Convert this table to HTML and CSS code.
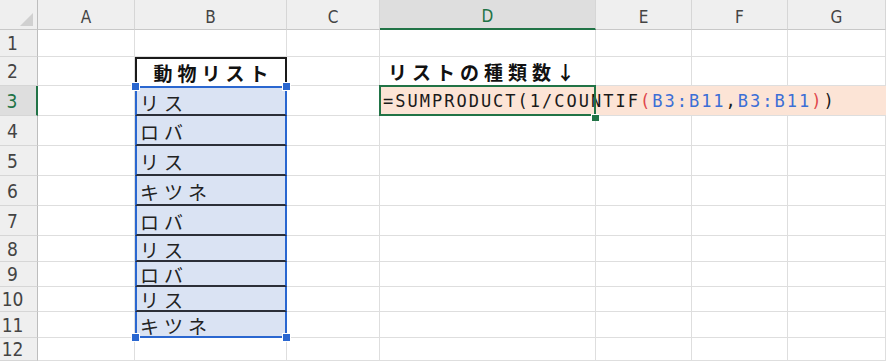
FILE: index.html
```html
<!DOCTYPE html>
<html lang="ja">
<head>
  <meta charset="UTF-8" />
  <meta name="viewport" content="width=device-width, initial-scale=1" />
  <title>動物リスト</title>
  <link rel="stylesheet" href="styles.css">
</head>
<body>
  <div class="sheet">
    <div class="row">
      <div class="corner">
        <svg width="38" height="30" viewBox="0 0 38 30"><polygon points="33,13 33,26 20,26" fill="#d0d0d0"/></svg>
      </div>
      <div class="col">A</div>
      <div class="col">B</div>
      <div class="col">C</div>
      <div class="col col-on">D</div>
      <div class="col">E</div>
      <div class="col">F</div>
      <div class="col">G</div>
    </div>

    <div class="row">
      <div class="num">1</div>
      <div class="cell"></div><div class="cell"></div><div class="cell"></div><div class="cell"></div>
      <div class="cell"></div><div class="cell"></div><div class="cell"></div>
    </div>

    <div class="row">
      <div class="num">2</div>
      <div class="cell"></div>
      <div class="cell title">動物リスト</div>
      <div class="cell"></div>
      <div class="cell note">リストの種類数↓</div>
      <div class="cell"></div><div class="cell"></div><div class="cell"></div>
    </div>

    <div class="row">
      <div class="num num-on">3</div>
      <div class="cell"></div>
      <div class="cell pick pick-top">リス<span class="knob knob-l"></span><span class="knob knob-r"></span></div>
      <div class="cell"></div>
      <div class="cell edit">=SUMPRODUCT(1/COUNTIF<span class="paren">(</span><span class="ref">B3:B11</span>,<span class="ref">B3:B11</span><span class="paren">)</span>)</div>
    </div>

    <div class="row">
      <div class="num">4</div>
      <div class="cell"></div>
      <div class="cell pick">ロバ</div>
      <div class="cell"></div><div class="cell"></div><div class="cell"></div><div class="cell"></div><div class="cell"></div>
    </div>

    <div class="row">
      <div class="num">5</div>
      <div class="cell"></div>
      <div class="cell pick">リス</div>
      <div class="cell"></div><div class="cell"></div><div class="cell"></div><div class="cell"></div><div class="cell"></div>
    </div>

    <div class="row">
      <div class="num">6</div>
      <div class="cell"></div>
      <div class="cell pick">キツネ</div>
      <div class="cell"></div><div class="cell"></div><div class="cell"></div><div class="cell"></div><div class="cell"></div>
    </div>

    <div class="row">
      <div class="num">7</div>
      <div class="cell"></div>
      <div class="cell pick">ロバ</div>
      <div class="cell"></div><div class="cell"></div><div class="cell"></div><div class="cell"></div><div class="cell"></div>
    </div>

    <div class="row">
      <div class="num">8</div>
      <div class="cell"></div>
      <div class="cell pick">リス</div>
      <div class="cell"></div><div class="cell"></div><div class="cell"></div><div class="cell"></div><div class="cell"></div>
    </div>

    <div class="row">
      <div class="num">9</div>
      <div class="cell"></div>
      <div class="cell pick">ロバ</div>
      <div class="cell"></div><div class="cell"></div><div class="cell"></div><div class="cell"></div><div class="cell"></div>
    </div>

    <div class="row">
      <div class="num">10</div>
      <div class="cell"></div>
      <div class="cell pick">リス</div>
      <div class="cell"></div><div class="cell"></div><div class="cell"></div><div class="cell"></div><div class="cell"></div>
    </div>

    <div class="row">
      <div class="num">11</div>
      <div class="cell"></div>
      <div class="cell pick pick-end">キツネ<span class="knob knob-l"></span><span class="knob knob-r"></span></div>
      <div class="cell"></div><div class="cell"></div><div class="cell"></div><div class="cell"></div><div class="cell"></div>
    </div>

    <div class="row">
      <div class="num">12</div>
      <div class="cell"></div><div class="cell"></div><div class="cell"></div><div class="cell"></div>
      <div class="cell"></div><div class="cell"></div><div class="cell"></div>
    </div>
  </div>
</body>
</html>
```

FILE: styles.css
```css
body {
  margin: 0;
  background: #fff;
  overflow: hidden;
  font-family: "Noto Sans CJK JP", "Noto Sans", sans-serif;
  color: #111;
}
.sheet {
  display: grid;
  grid-template-columns: 38px 97px 152px 93px 216px 96px 96px 98px;
  grid-template-rows: 30px 27px 29px 30px 30px 30px 30px 30px 26px 25px 25px 26px 23px;
  width: 886px;
  height: 361px;
}
.row {
  display: contents;
}

/* headers */
.corner {
  background: #efefef;
  border-right: 1px solid #bdbdbd;
  border-bottom: 1px solid #c8c8c8;
  box-sizing: border-box;
}
.corner svg {
  display: block;
}
.col {
  background: #efefef;
  border-right: 1px solid #d6d6d6;
  border-bottom: 1px solid #c8c8c8;
  box-sizing: border-box;
  display: flex;
  align-items: center;
  justify-content: center;
  padding-top: 4px;
  font-family: "DejaVu Sans Condensed", "DejaVu Sans", sans-serif;
  font-size: 17px;
  color: #444;
}
.col-on {
  background: #dedede;
  color: #217346;
  border-bottom: 2px solid #217346;
}
.num {
  background: #efefef;
  border-right: 1px solid #bdbdbd;
  border-bottom: 1px solid #d6d6d6;
  box-sizing: border-box;
  display: flex;
  align-items: center;
  justify-content: center;
  padding-right: 12px;
  font-family: "DejaVu Sans Condensed", "DejaVu Sans", sans-serif;
  font-size: 19px;
  color: #444;
}
.num-on {
  background: #dedede;
  color: #217346;
  border-right: 2px solid #217346;
}

/* cells */
.cell {
  border-right: 1px solid #dedede;
  border-bottom: 1px solid #dedede;
  box-sizing: border-box;
  display: flex;
  align-items: center;
  font-size: 19px;
  letter-spacing: 5px;
  white-space: nowrap;
}
.title {
  border: 2px solid #1a1a1a;
  border-bottom: none;
  justify-content: center;
  padding-left: 5px;
  font-weight: bold;
}
.note {
  padding-left: 8px;
  font-weight: bold;
}

/* referenced range B3:B11 */
.pick {
  position: relative;
  background: #dae3f3;
  border-left: 2px solid #2a67d0;
  border-right: 2px solid #2a67d0;
  border-bottom: 2px solid #2c2f38;
  padding-left: 3px;
  padding-top: 2px;
  color: #222;
}
.pick-top {
  border-top: 2px solid #2a67d0;
}
.pick-end {
  border-bottom: 2px solid #2a67d0;
}
.knob {
  position: absolute;
  width: 7px;
  height: 7px;
  background: #2a67d0;
  border: 1px solid #fff;
}
.pick-top .knob {
  top: -6px;
}
.pick-end .knob {
  bottom: -6px;
}
.knob-l {
  left: -6px;
}
.knob-r {
  right: -6px;
}

/* formula being edited in D3 */
.edit {
  grid-column: span 4;
  position: relative;
  background: #fce4d6;
  border-right: none;
  padding-left: 3px;
  font-family: "DejaVu Sans Mono", monospace;
  font-size: 17px;
  letter-spacing: 2px;
  color: #1a1a1a;
}
.edit::before {
  content: "";
  position: absolute;
  left: -1px;
  top: -1px;
  width: 217px;
  height: 31px;
  border: 2px solid #217346;
  box-sizing: border-box;
}
.edit::after {
  content: "";
  position: absolute;
  left: 211px;
  top: 28px;
  width: 7px;
  height: 6px;
  background: #217346;
  border-left: 1px solid #fff;
  border-top: 1px solid #fff;
}
.ref {
  color: #3b6fd6;
}
.paren {
  color: #e0474c;
}
```
